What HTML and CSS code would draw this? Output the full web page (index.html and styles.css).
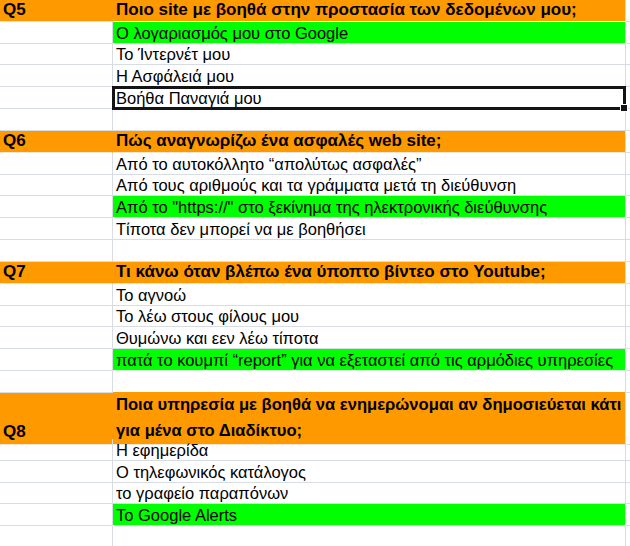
FILE: index.html
```html
<!DOCTYPE html>
<html lang="el">
<head>
<meta charset="utf-8">
<title>Quiz</title>
<link rel="stylesheet" href="styles.css">
</head>
<body>
<div class="sheet">
  <div class="row head"><div class="c a">Q5</div><div class="c b">Ποιο site με βοηθά στην προστασία των δεδομένων μου;</div><div class="c z"></div></div>
  <div class="row"><div class="c a"></div><div class="c b ok">Ο λογαριασμός μου στο Google</div><div class="c z"></div></div>
  <div class="row"><div class="c a"></div><div class="c b">Το Ίντερνέτ μου</div><div class="c z"></div></div>
  <div class="row"><div class="c a"></div><div class="c b">Η Ασφάλειά μου</div><div class="c z"></div></div>
  <div class="row"><div class="c a"></div><div class="c b sel">Βοήθα Παναγιά μου<span class="box"><span class="handle"></span></span></div><div class="c z"></div></div>
  <div class="row"><div class="c a"></div><div class="c b"></div><div class="c z"></div></div>

  <div class="row head"><div class="c a">Q6</div><div class="c b">Πώς αναγνωρίζω ένα ασφαλές web site;</div><div class="c z"></div></div>
  <div class="row"><div class="c a"></div><div class="c b">Από το αυτοκόλλητο “απολύτως ασφαλές”</div><div class="c z"></div></div>
  <div class="row"><div class="c a"></div><div class="c b">Από τους αριθμούς και τα γράμματα μετά τη διεύθυνση</div><div class="c z"></div></div>
  <div class="row"><div class="c a"></div><div class="c b ok">Από το "https://" στο ξεκίνημα της ηλεκτρονικής διεύθυνσης</div><div class="c z"></div></div>
  <div class="row"><div class="c a"></div><div class="c b">Τίποτα δεν μπορεί να με βοηθήσει</div><div class="c z"></div></div>
  <div class="row"><div class="c a"></div><div class="c b"></div><div class="c z"></div></div>

  <div class="row head"><div class="c a">Q7</div><div class="c b">Τι κάνω όταν βλέπω ένα ύποπτο βίντεο στο Youtube;</div><div class="c z"></div></div>
  <div class="row"><div class="c a"></div><div class="c b">Το αγνοώ</div><div class="c z"></div></div>
  <div class="row"><div class="c a"></div><div class="c b">Το λέω στους φίλους μου</div><div class="c z"></div></div>
  <div class="row"><div class="c a"></div><div class="c b">Θυμώνω και εεν λέω τίποτα</div><div class="c z"></div></div>
  <div class="row"><div class="c a"></div><div class="c b ok">πατά το κουμπί “report” για να εξεταστεί από τις αρμόδιες υπηρεσίες</div><div class="c z"></div></div>
  <div class="row"><div class="c a"></div><div class="c b"></div><div class="c z"></div></div>

  <div class="row head tall"><div class="c a">Q8</div><div class="c b">Ποια υπηρεσία με βοηθά να ενημερώνομαι αν δημοσιεύεται κάτι<br>για μένα στο Διαδίκτυο;</div><div class="c z"></div></div>
  <div class="row"><div class="c a"></div><div class="c b">Η εφημερίδα</div><div class="c z"></div></div>
  <div class="row"><div class="c a"></div><div class="c b">Ο τηλεφωνικός κατάλογος</div><div class="c z"></div></div>
  <div class="row"><div class="c a"></div><div class="c b">το γραφείο παραπόνων</div><div class="c z"></div></div>
  <div class="row"><div class="c a"></div><div class="c b ok">Το Google Alerts</div><div class="c z"></div></div>
  <div class="row"><div class="c a"></div><div class="c b"></div><div class="c z"></div></div>
</div>
</body>
</html>
```

FILE: styles.css
```css
html, body {
  margin: 0;
  padding: 0;
  background: #ffffff;
}
body {
  font-family: "Liberation Sans", Arial, sans-serif;
  font-size: 16.5px;
  color: #000000;
  width: 630px;
  height: 546px;
  overflow: hidden;
}
.sheet {
  display: flex;
  flex-direction: column;
}
.row {
  display: grid;
  grid-template-columns: 113px 513px 1fr;
  height: 21.83px;
  flex: none;
}
.row.tall {
  height: 46px;
}
.c {
  box-sizing: border-box;
  border-bottom: 1px solid #d8dce4;
  border-right: 1px solid #d8dce4;
  display: flex;
  align-items: flex-end;
  padding-left: 3px;
  white-space: nowrap;
  overflow: visible;
}
.c.z {
  border-right: none;
}
.head .a,
.head .b {
  background: #ff9900;
  font-weight: bold;
  font-size: 17px;
  align-items: center;
  border-bottom-color: #f4e6d2;
}
.head .a {
  border-right-color: #ff9900;
}
.tall .a {
  align-items: flex-end;
  padding-bottom: 2px;
}
.tall .b {
  display: block;
  font-size: 16.6px;
  line-height: 26px;
  padding-top: 0;
  margin-top: -1px;
}
.ok {
  background: #00ff00;
  border-bottom-color: #d6f5d6;
}
.sel {
  position: relative;
}
.box {
  position: absolute;
  left: -1px;
  top: -1px;
  right: -1px;
  bottom: -2px;
  border: 3px solid #141414;
  pointer-events: none;
}
.handle {
  position: absolute;
  right: -5px;
  bottom: -5px;
  width: 6px;
  height: 6px;
  background: #141414;
  border: 1px solid #ffffff;
}
```
